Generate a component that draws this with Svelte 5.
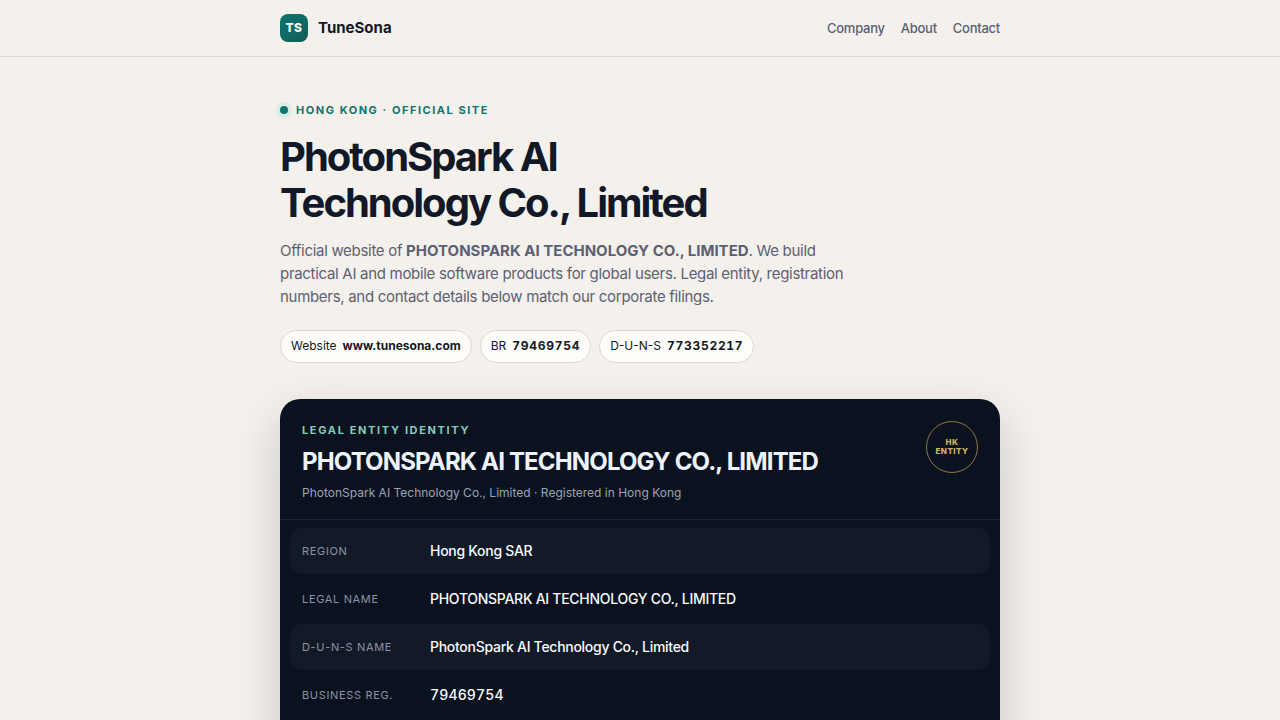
<script>
  const nav = [
    { label: 'Company', href: '#company' },
    { label: 'About', href: '#about' },
    { label: 'Contact', href: '#contact' }
  ];

  const chips = [
    { label: 'Website', value: 'www.tunesona.com' },
    { label: 'BR', value: '79469754', numeric: true },
    { label: 'D-U-N-S', value: '773352217', numeric: true }
  ];

  const rows = [
    { label: 'Region', value: 'Hong Kong SAR' },
    { label: 'Legal name', value: 'PHOTONSPARK AI TECHNOLOGY CO., LIMITED' },
    { label: 'D-U-N-S name', value: 'PhotonSpark AI Technology Co., Limited' },
    { label: 'Business reg.', value: '79469754', numeric: true },
    { label: 'D-U-N-S', value: '773352217', numeric: true }
  ];
</script>

<header class="site-header">
  <div class="wrap header-row">
    <a class="brand" href="#top">
      <span class="brand-mark">TS</span>
      <span>TuneSona</span>
    </a>
    <nav class="site-nav">
      {#each nav as item}
        <a href={item.href}>{item.label}</a>
      {/each}
    </nav>
  </div>
</header>

<main class="wrap" id="top">
  <section class="hero">
    <p class="eyebrow"><span class="dot"></span>Hong Kong · Official site</p>
    <h1>PhotonSpark AI<br />Technology Co., Limited</h1>
    <p class="lead">
      Official website of <strong>PHOTONSPARK AI TECHNOLOGY CO., LIMITED</strong>. We build practical AI
      and mobile software products for global users. Legal entity, registration numbers, and contact
      details below match our corporate filings.
    </p>
    <div class="chips">
      {#each chips as chip}
        <span class="chip">{chip.label} <strong class:numeric={chip.numeric}>{chip.value}</strong></span>
      {/each}
    </div>
  </section>

  <section class="entity" id="company">
    <div class="entity-head">
      <div>
        <p class="entity-kicker">Legal entity identity</p>
        <h2>PHOTONSPARK AI TECHNOLOGY CO., LIMITED</h2>
        <p class="entity-sub">PhotonSpark AI Technology Co., Limited · Registered in Hong Kong</p>
      </div>
      <div class="seal">HK<br />ENTITY</div>
    </div>
    <dl class="entity-rows">
      {#each rows as row}
        <div class="entity-row">
          <dt>{row.label}</dt>
          <dd class:numeric={row.numeric}>{row.value}</dd>
        </div>
      {/each}
    </dl>
  </section>
</main>

<style>
  :global(body) {
    margin: 0;
    background: #f4f0eb;
    color: #111827;
    font-family: Inter, 'Liberation Sans', sans-serif;
    font-size: 15px;
    line-height: 24px;
    -webkit-font-smoothing: antialiased;
  }

  :global(html) {
    scrollbar-width: none;
  }

  * {
    box-sizing: border-box;
  }

  p,
  h1,
  h2,
  dl,
  dd {
    margin: 0;
  }

  a {
    color: inherit;
    text-decoration: none;
  }

  .wrap {
    width: 100%;
    max-width: 760px;
    margin: 0 auto;
    padding: 0 20px;
  }

  .site-header {
    border-bottom: 1px solid #dcd9d4;
  }

  .header-row {
    display: flex;
    align-items: center;
    justify-content: space-between;
    min-height: 56px;
  }

  .brand {
    display: flex;
    align-items: center;
    gap: 10px;
    font-weight: 700;
  }

  .brand-mark {
    display: grid;
    place-items: center;
    width: 28px;
    height: 28px;
    border-radius: 8px;
    background: linear-gradient(145deg, #0f766e, #115e59);
    color: #fff;
    font-size: 12px;
    font-weight: 800;
    letter-spacing: 0.04em;
  }

  .site-nav {
    display: flex;
    gap: 16px;
    color: #5b6172;
    font-size: 13px;
    font-weight: 500;
    letter-spacing: -0.02em;
  }

  .site-nav a:hover {
    color: #0f766e;
  }

  .hero {
    padding: 44px 0 36px;
  }

  .eyebrow {
    display: flex;
    align-items: center;
    gap: 8px;
    margin-bottom: 15px;
    color: #0f766e;
    font-size: 11px;
    font-weight: 700;
    line-height: 18px;
    letter-spacing: 0.14em;
    text-transform: uppercase;
  }

  .dot {
    width: 8px;
    height: 8px;
    border-radius: 50%;
    background: #0f766e;
    box-shadow: 0 0 0 4px #d9ede8;
  }

  h1 {
    font-size: 40px;
    font-weight: 700;
    line-height: 46px;
    letter-spacing: -0.05em;
  }

  .lead {
    max-width: 580px;
    margin-top: 13px;
    color: #5b6172;
    line-height: 23px;
    letter-spacing: -0.02em;
  }

  .lead strong {
    letter-spacing: normal;
  }

  .chips {
    display: flex;
    flex-wrap: wrap;
    gap: 8px;
    margin-top: 22px;
  }

  .chip {
    display: flex;
    align-items: center;
    gap: 6px;
    padding: 5px 10px 6px;
    border: 1px solid #dcd9d4;
    border-radius: 999px;
    background: #fffdf9;
    font-size: 12px;
    line-height: 20px;
  }

  .chip strong {
    font-weight: 700;
  }

  .numeric {
    font-variant-numeric: tabular-nums;
    letter-spacing: 0.06em;
  }

  .entity {
    overflow: hidden;
    border-radius: 20px;
    background: #0a121f;
    color: #f8fafc;
    box-shadow: 0 18px 50px rgba(11, 18, 24, 0.18);
  }

  .entity-head {
    display: flex;
    justify-content: space-between;
    gap: 16px;
    padding: 22px 22px 17px;
    border-bottom: 1px solid #1d2430;
  }

  .entity-kicker {
    color: #86c8be;
    font-size: 11px;
    font-weight: 700;
    line-height: 18px;
    letter-spacing: 0.15em;
    text-transform: uppercase;
  }

  h2 {
    margin: 8px 0 7px;
    color: #eef2fb;
    font-size: 24px;
    font-weight: 700;
    line-height: 29px;
    letter-spacing: -0.035em;
  }

  .entity-sub {
    color: #9aa3b5;
    font-size: 12px;
    line-height: 19px;
  }

  .seal {
    display: grid;
    flex-shrink: 0;
    place-content: center;
    width: 52px;
    height: 52px;
    border: 1px solid #8f7642;
    border-radius: 50%;
    color: #d0b466;
    font-size: 8px;
    font-weight: 800;
    line-height: 9px;
    letter-spacing: 0.06em;
    text-align: center;
  }

  .entity-rows {
    display: grid;
    gap: 2px;
    padding: 8px 10px;
  }

  .entity-row {
    display: grid;
    grid-template-columns: 116px 1fr;
    align-items: center;
    gap: 12px;
    padding: 11px 12px;
    border-radius: 12px;
  }

  .entity-row:nth-child(odd) {
    background: #131a27;
  }

  dt {
    color: #8b93a5;
    font-size: 11px;
    letter-spacing: 0.06em;
    text-transform: uppercase;
  }

  dd {
    font-size: 14px;
    font-weight: 500;
    letter-spacing: -0.02em;
  }

  dd.numeric {
    letter-spacing: 0.01em;
  }
</style>
